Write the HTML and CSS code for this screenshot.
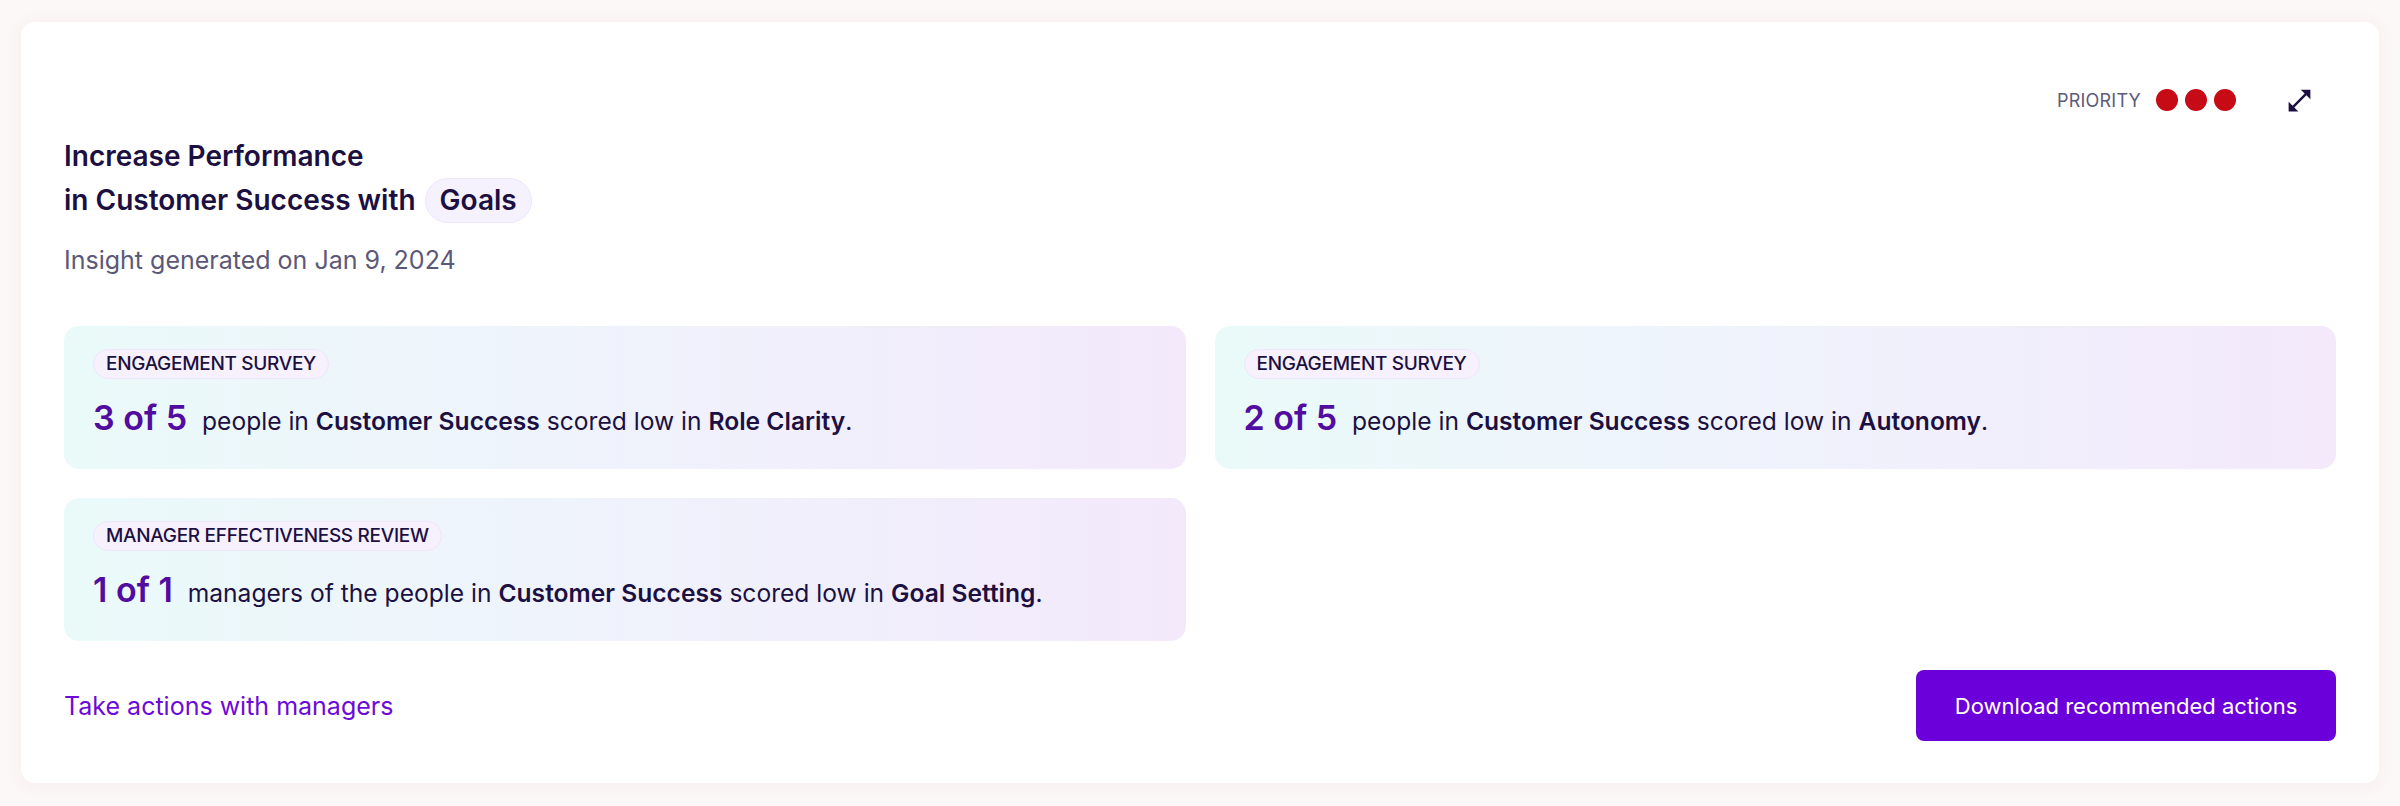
FILE: index.html
```html
<!DOCTYPE html>
<html lang="en">
<head>
<meta charset="utf-8">
<title>Insight</title>
<link rel="stylesheet" href="styles.css">
</head>
<body>
<div class="card">
  <div class="top-row">
    <span class="priority-label">PRIORITY</span>
    <span class="dots"><span class="dot"></span><span class="dot"></span><span class="dot"></span></span>
    <svg class="expand" viewBox="0 0 24 24" aria-hidden="true"><path d="M21 11V3h-8l3.29 3.29-10 10L3 13v8h8l-3.29-3.29 10-10z"/></svg>
  </div>
  <h1 class="title">Increase Performance<br>in Customer Success with <span class="pill">Goals</span></h1>
  <p class="subtitle">Insight generated on Jan 9, 2024</p>
  <div class="grid">
    <div class="mini">
      <span class="tag">ENGAGEMENT SURVEY</span>
      <p class="stat"><span class="num">3 of 5</span> people in <b>Customer Success</b> scored low in <b>Role Clarity</b>.</p>
    </div>
    <div class="mini">
      <span class="tag">ENGAGEMENT SURVEY</span>
      <p class="stat"><span class="num">2 of 5</span> people in <b>Customer Success</b> scored low in <b>Autonomy</b>.</p>
    </div>
    <div class="mini">
      <span class="tag">MANAGER EFFECTIVENESS REVIEW</span>
      <p class="stat"><span class="num">1 of 1</span> managers of the people in <b>Customer Success</b> scored low in <b>Goal Setting</b>.</p>
    </div>
  </div>
  <div class="footer">
    <a class="link" href="#">Take actions with managers</a>
    <button class="btn" type="button">Download recommended actions</button>
  </div>
</div>
</body>
</html>
```
FILE: styles.css
```css
html, body {
  margin: 0;
  padding: 0;
}
body {
  background: #fcf8f7;
  font-family: "Inter", "Liberation Sans", sans-serif;
  color: #1c1042;
  padding: 22px 21px 23px;
}
.card {
  background: #ffffff;
  border-radius: 14px;
  box-shadow: 0 2px 18px rgba(150, 90, 70, 0.07);
  padding: 56px 43px 42px 43px;
  height: 761px;
  box-sizing: border-box;
}
.top-row {
  display: flex;
  justify-content: flex-end;
  align-items: center;
  height: 44px;
}
.priority-label {
  font-size: 18px;
  color: #5d5a7a;
  letter-spacing: 0.2px;
  margin-right: 15px;
}
.dots {
  display: flex;
  gap: 7px;
}
.dot {
  width: 22px;
  height: 22px;
  border-radius: 50%;
  background: #c60a16;
}
.expand {
  width: 29px;
  height: 29px;
  fill: #1c1042;
  margin-left: 49px;
  margin-right: 22px;
}
.title {
  margin: 12px 0 0;
  font-size: 28px;
  line-height: 44px;
  font-weight: 600;
  color: #1c1042;
}
.pill {
  display: inline-block;
  height: 45px;
  line-height: 43px;
  box-sizing: border-box;
  padding: 0 14px;
  margin-left: 2px;
  border-radius: 23px;
  background: #f5f1fd;
  border: 1px solid #eee7fa;
  vertical-align: top;
}
.subtitle {
  margin: 20px 0 0;
  font-size: 25px;
  line-height: 34px;
  color: #5c5878;
}
.grid {
  margin-top: 49px;
  display: grid;
  grid-template-columns: 1fr 1fr;
  gap: 29px;
}
.mini {
  border-radius: 15px;
  background: linear-gradient(90deg, #eafaf9 0%, #eff3fc 45%, #f3e9fb 100%);
  padding: 23px 29px 0;
  height: 143px;
  box-sizing: border-box;
}
.tag {
  display: inline-block;
  height: 30px;
  line-height: 28px;
  box-sizing: border-box;
  padding: 0 12px;
  border-radius: 15px;
  background: #f6f1fd;
  border: 1px solid #eee6fa;
  font-size: 19px;
  font-weight: 500;
  letter-spacing: -0.3px;
  color: #1c1042;
}
.stat {
  margin: 17px 0 0;
  font-size: 24.6px;
  line-height: 44px;
  color: #1c1042;
}
.stat b {
  font-weight: 600;
}
.num {
  font-size: 34px;
  font-weight: 600;
  color: #520c9f;
  margin-right: 8px;
}
.footer {
  margin-top: 29px;
  display: flex;
  justify-content: space-between;
  align-items: center;
}
.link {
  font-size: 25px;
  color: #6d0ad8;
  text-decoration: none;
}
.btn {
  width: 420px;
  height: 71px;
  border: none;
  border-radius: 8px;
  background: #6c00da;
  color: #ffffff;
  font-family: "Inter", "Liberation Sans", sans-serif;
  font-size: 22px;
  font-weight: 400;
}
```
